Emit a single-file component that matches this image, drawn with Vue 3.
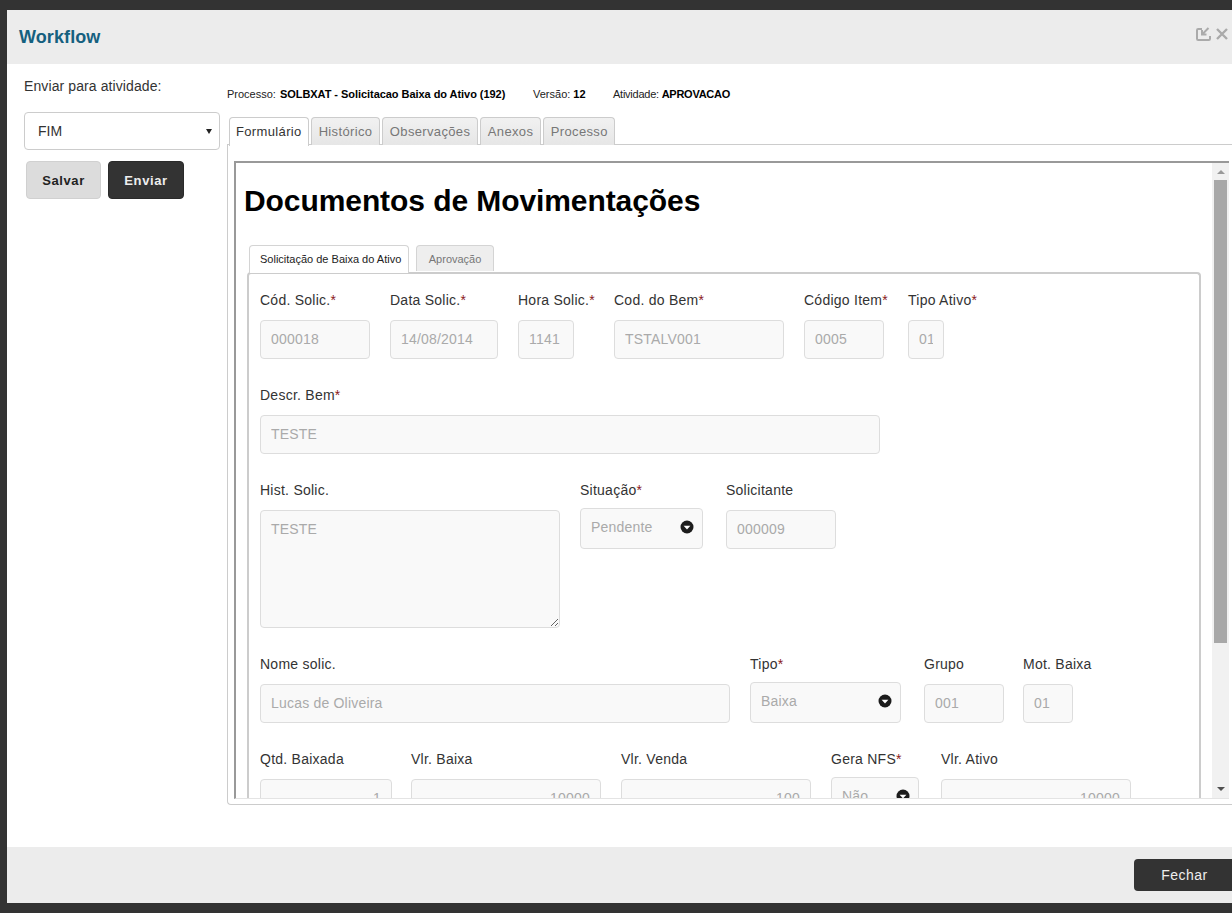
<script setup>
const tabs = ['Formulário', 'Histórico', 'Observações', 'Anexos', 'Processo']

const rows = [
  [
    { label: 'Cód. Solic.', req: true, value: '000018', width: 110 },
    { label: 'Data Solic.', req: true, value: '14/08/2014', width: 108 },
    { label: 'Hora Solic.', req: true, value: '1141', width: 56 },
    { label: 'Cod. do Bem', req: true, value: 'TSTALV001', width: 170, gap: 40 },
    { label: 'Código Item', req: true, value: '0005', width: 80 },
    { label: 'Tipo Ativo', req: true, value: '01', width: 36, gap: 24 }
  ],
  [
    { label: 'Descr. Bem', req: true, value: 'TESTE', width: 620 }
  ],
  [
    { label: 'Hist. Solic.', value: 'TESTE', width: 300, type: 'area' },
    { label: 'Situação', req: true, value: 'Pendente', width: 123, type: 'select' },
    { label: 'Solicitante', value: '000009', width: 110, gap: 23 }
  ],
  [
    { label: 'Nome solic.', value: 'Lucas de Oliveira', width: 470 },
    { label: 'Tipo', req: true, value: 'Baixa', width: 151, type: 'select' },
    { label: 'Grupo', value: '001', width: 80, gap: 23 },
    { label: 'Mot. Baixa', value: '01', width: 50, gap: 19 }
  ],
  [
    { label: 'Qtd. Baixada', value: '1', width: 132, right: true },
    { label: 'Vlr. Baixa', value: '10000', width: 190, right: true, gap: 19 },
    { label: 'Vlr. Venda', value: '100', width: 190, right: true },
    { label: 'Gera NFS', req: true, value: 'Não', width: 88, type: 'select' },
    { label: 'Vlr. Ativo', value: '10000', width: 190, right: true, gap: 22 }
  ]
]
</script>

<template>
  <div class="page">
    <div class="modal">
      <header class="modal-head">
        <h2>Workflow</h2>
        <div class="head-icons">
          <svg width="15" height="14" viewBox="0 0 15 14" fill="none" stroke="#aaa" stroke-width="2">
            <path d="M6 2H2.2Q1 2 1 3.2V11.8Q1 13 2.2 13H12.8Q14 13 14 11.8V9" />
            <path d="M12.5 1L6.5 7M6 3V7.5H10.5" />
          </svg>
          <svg width="12" height="12" viewBox="0 0 12 12" fill="none" stroke="#aaa" stroke-width="2.4">
            <path d="M1 1L11 11M11 1L1 11" />
          </svg>
        </div>
      </header>

      <div class="modal-body">
        <aside class="side">
          <p class="side-label">Enviar para atividade:</p>
          <div class="side-select">
            <span>FIM</span>
            <i class="side-caret"></i>
          </div>
          <div class="side-actions">
            <button class="btn btn-light">Salvar</button>
            <button class="btn btn-dark">Enviar</button>
          </div>
        </aside>

        <main class="main">
          <div class="meta">
            <span class="meta-a">Processo: <b>SOLBXAT - Solicitacao Baixa do Ativo (192)</b></span>
            <span class="meta-b">Versão: <b>12</b></span>
            <span class="meta-c">Atividade: <b>APROVACAO</b></span>
          </div>

          <div class="tabs">
            <div v-for="(tab, i) in tabs" :key="tab" class="tab" :class="{ active: i === 0 }">{{ tab }}</div>
          </div>

          <div class="tab-panel">
            <div class="frame">
              <div class="frame-content">
                <h1>Documentos de Movimentações</h1>
                <div class="inner-tabs">
                  <div class="inner-tab active">Solicitação de Baixa do Ativo</div>
                  <div class="inner-tab">Aprovação</div>
                </div>
                <div class="form">
                  <div v-for="(row, r) in rows" :key="r" class="form-row">
                    <div
                      v-for="f in row"
                      :key="f.label"
                      class="field"
                      :style="{ width: f.width + 'px', marginLeft: f.gap ? f.gap - 20 + 'px' : null }"
                    >
                      <label>{{ f.label }}<em v-if="f.req">*</em></label>
                      <textarea v-if="f.type === 'area'" class="control area" readonly :value="f.value"></textarea>
                      <div v-else-if="f.type === 'select'" class="control select">
                        <span>{{ f.value }}</span>
                        <svg width="14" height="14" viewBox="0 0 14 14">
                          <circle cx="7" cy="7" r="6.5" fill="#1c1c1c" />
                          <path d="M3.6 5.8H10.4L7 9.4Z" fill="#fff" />
                        </svg>
                      </div>
                      <input v-else class="control" :class="{ right: f.right }" readonly :value="f.value" />
                    </div>
                  </div>
                </div>
              </div>
              <div class="scrollbar">
                <i class="arrow up"></i>
                <div class="thumb"></div>
                <i class="arrow down"></i>
              </div>
            </div>
          </div>
        </main>
      </div>

      <footer class="modal-foot">
        <button class="btn-close">Fechar</button>
      </footer>
    </div>
  </div>
</template>

<style>
html, body {
  margin: 0;
  background: #333333;
}
</style>

<style scoped>
.page {
  height: 913px;
  box-sizing: border-box;
  padding: 10px 0 10px 7px;
  background: #333333;
  overflow: hidden;
  font-family: "Liberation Sans", Arial, sans-serif;
  color: #333333;
}
.modal {
  height: 100%;
  background: #ffffff;
  display: flex;
  flex-direction: column;
  overflow: hidden;
}

/* header */
.modal-head {
  height: 54px;
  flex: none;
  background: #ececec;
  display: flex;
  align-items: center;
  justify-content: space-between;
  padding: 0 4px 0 12px;
}
.modal-head h2 {
  margin: 0;
  font-size: 18px;
  letter-spacing: 0.1px;
  color: #15607f;
}
.head-icons {
  display: flex;
  align-items: center;
  gap: 5px;
  margin-top: -6px;
}

/* body */
.modal-body {
  flex: 1;
  display: flex;
  min-height: 0;
}
.side {
  width: 220px;
  flex: none;
  box-sizing: border-box;
  padding: 12px 7px 0 17px;
}
.side-label {
  margin: 0;
  font-size: 14px;
  line-height: 20px;
  letter-spacing: 0.1px;
}
.side-select {
  margin-top: 16px;
  height: 38px;
  box-sizing: border-box;
  border: 1px solid #cccccc;
  border-radius: 4px;
  display: flex;
  align-items: center;
  justify-content: space-between;
  padding: 0 7px 0 13px;
  font-size: 14px;
}
.side-caret {
  border-top: 5px solid #222222;
  border-left: 3px solid transparent;
  border-right: 3px solid transparent;
}
.side-actions {
  margin: 11px 0 0 2px;
  display: flex;
  gap: 7px;
}
.btn {
  height: 38px;
  box-sizing: border-box;
  border-radius: 4px;
  font-family: inherit;
  font-size: 13px;
  font-weight: bold;
  letter-spacing: 0.6px;
  padding: 0;
}
.btn-light {
  width: 75px;
  background: #dcdcdc;
  border: 1px solid #d0d0d0;
  color: #222222;
}
.btn-dark {
  width: 76px;
  background: #333333;
  border: 1px solid #2a2a2a;
  color: #eeeeee;
}

/* main column */
.main {
  flex: 1;
  min-width: 0;
  padding-top: 20px;
}
.meta {
  height: 20px;
  display: flex;
  align-items: center;
  font-size: 11px;
  color: #222222;
}
.meta b {
  color: #000000;
}
.meta-a {
  width: 306px;
}
.meta-a b {
  letter-spacing: -0.05px;
  margin-left: 1px;
}
.meta-b {
  width: 80px;
}
.meta-c {
  letter-spacing: -0.25px;
}
.tabs {
  margin-top: 13px;
  padding-left: 2px;
  height: 28px;
  display: flex;
  gap: 2.5px;
  position: relative;
  z-index: 1;
}
.tab {
  box-sizing: border-box;
  padding: 0 6.5px;
  line-height: 28px;
  font-size: 13px;
  letter-spacing: 0.35px;
  color: #777777;
  border: 1px solid #cccccc;
  border-bottom: 0;
  border-radius: 4px 4px 0 0;
  background: linear-gradient(#f1f1f1, #e6e6e6);
}
.tab.active {
  background: #ffffff;
  color: #333333;
  height: 29px;
  padding: 0 6px;
}
.tab-panel {
  box-sizing: border-box;
  height: 661px;
  margin-top: -1px;
  border: 1px solid #cccccc;
  border-right: 0;
  border-radius: 0 0 0 4px;
  padding: 16px 3px 5px 6px;
}
.frame {
  height: 100%;
  box-sizing: border-box;
  border-top: 2px solid #999999;
  border-left: 2px solid #999999;
  border-bottom: 1px solid #e4e4e4;
  display: flex;
}
.frame-content {
  flex: 1;
  min-width: 0;
  overflow: hidden;
  padding-left: 8px;
}
.frame-content h1 {
  margin: 20px 0 0;
  font-size: 30px;
  line-height: 36px;
  letter-spacing: -0.08px;
  color: #000000;
}

/* inner tabs */
.inner-tabs {
  margin: 26px 0 0 5px;
  height: 28px;
  display: flex;
  gap: 7px;
  position: relative;
  z-index: 1;
}
.inner-tab {
  box-sizing: border-box;
  height: 26px;
  line-height: 26px;
  padding: 0 11.5px;
  font-size: 11px;
  color: #777777;
  border: 1px solid #d4d4d4;
  border-bottom: 0;
  border-radius: 4px 4px 0 0;
  background: #eeeeee;
}
.inner-tab.active {
  height: 28px;
  background: #ffffff;
  color: #222222;
  padding: 0 7px 0 10px;
}
.form {
  margin: -1px 0 0 3px;
  width: 954px;
  box-sizing: border-box;
  border: 2px solid #cccccc;
  border-bottom: 0;
  border-radius: 4px 4px 0 0;
  padding: 16px 0 0 11px;
}

/* fields */
.form-row {
  display: flex;
  gap: 20px;
  margin-bottom: 26px;
}
.field {
  flex: none;
  display: flex;
  flex-direction: column;
}
.field label {
  height: 20px;
  line-height: 20px;
  font-size: 14px;
  letter-spacing: 0.25px;
  white-space: nowrap;
  color: #333333;
}
.field em {
  font-style: normal;
  color: #8b1a1a;
}
.control {
  display: block;
  width: 100%;
  height: 39px;
  margin-top: 10px;
  box-sizing: border-box;
  border: 1px solid #dddddd;
  border-radius: 4px;
  background: #f9f9f9;
  padding: 0 10px 2px;
  font-family: inherit;
  font-size: 14px;
  letter-spacing: 0.2px;
  color: #aaaaaa;
  outline: none;
}
.control.right {
  text-align: right;
}
.area {
  height: 118px;
  padding: 9px 10px;
  resize: both;
  line-height: 18px;
}
.select {
  height: 41px;
  margin-top: 8px;
  display: flex;
  align-items: center;
  justify-content: space-between;
  padding: 0 8px 3px 10px;
}

/* fake scrollbar */
.scrollbar {
  width: 17px;
  flex: none;
  background: #f1f1f1;
  display: flex;
  flex-direction: column;
  align-items: center;
  padding-top: 7px;
  box-sizing: border-box;
}
.thumb {
  width: 13px;
  height: 463px;
  margin-top: 6px;
  background: #a8a8a8;
}
.arrow {
  border-left: 4px solid transparent;
  border-right: 4px solid transparent;
}
.arrow.up {
  border-bottom: 4px solid #999999;
}
.arrow.down {
  border-top: 4px solid #505050;
  margin-top: auto;
  margin-bottom: 7px;
}

/* footer */
.modal-foot {
  height: 56px;
  flex: none;
  background: #ececec;
  display: flex;
  justify-content: flex-end;
  padding-top: 12px;
  box-sizing: border-box;
}
.btn-close {
  width: 101px;
  height: 32px;
  margin-right: -3px;
  border: 0;
  border-radius: 4px;
  background: #333333;
  color: #eeeeee;
  font-family: inherit;
  font-size: 14px;
  letter-spacing: 0.5px;
}
</style>
